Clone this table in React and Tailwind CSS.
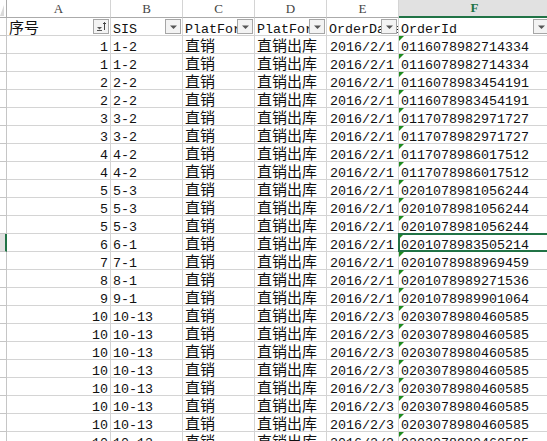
import React from "react";

const mono = { fontFamily: '"Liberation Mono", "Noto Sans CJK SC", monospace' };
const cjk = { fontFamily: '"Noto Sans CJK SC", "Liberation Mono", sans-serif' };

const cols = [
  { key: "A", w: "w-[104px]" },
  { key: "B", w: "w-[72px]" },
  { key: "C", w: "w-[72px]" },
  { key: "D", w: "w-[72px]" },
  { key: "E", w: "w-[72px]" },
  { key: "F", w: "w-[152px]" },
];

const ids = [
  [1, "1-2", "0116078982714334"],
  [1, "1-2", "0116078982714334"],
  [2, "2-2", "0116078983454191"],
  [2, "2-2", "0116078983454191"],
  [3, "3-2", "0117078982971727"],
  [3, "3-2", "0117078982971727"],
  [4, "4-2", "0117078986017512"],
  [4, "4-2", "0117078986017512"],
  [5, "5-3", "0201078981056244"],
  [5, "5-3", "0201078981056244"],
  [5, "5-3", "0201078981056244"],
  [6, "6-1", "0201078983505214"],
  [7, "7-1", "0201078988969459"],
  [8, "8-1", "0201078989271536"],
  [9, "9-1", "0201078989901064"],
];

const rows = [
  ...ids.map(([n, sis, id]) => ({ n, sis, date: "2016/2/1", id })),
  ...Array.from({ length: 8 }, () => ({
    n: 10,
    sis: "10-13",
    date: "2016/2/3",
    id: "0203078980460585",
  })),
];

const FilterBtn = ({ sorted }) => (
  <div className="absolute right-[1px] top-[1px] w-[16px] h-[15px] border border-[#a6a6a6] bg-[#f3f3f3] flex items-center justify-center">
    {sorted ? (
      <svg width="14" height="13" viewBox="0 0 14 13">
        <path d="M3 7h5l-2.5 2.5z" fill="#555" />
        <path d="M3 10.5h5" stroke="#555" strokeWidth="1" />
        <path d="M10.5 10V2.5M9 4l1.5-1.5L12 4" stroke="#444" strokeWidth="1" fill="none" />
      </svg>
    ) : (
      <svg width="9" height="6" viewBox="0 0 9 6">
        <path d="M1 1.5h7L4.5 5z" fill="#555" />
      </svg>
    )}
  </div>
);

const Cell = ({ w, children, className = "" }) => (
  <div
    className={`${w} h-[18px] shrink-0 border-r border-b border-[#d4d4d4] relative overflow-hidden whitespace-nowrap pt-[6px] text-[13.33px] leading-[11px] text-[#111] ${className}`}
  >
    {children}
  </div>
);

const Zh = ({ children }) => (
  <span style={cjk} className="text-[15px] leading-[4px]">
    {children}
  </span>
);

export default function App() {
  return (
    <div className="w-[547px] h-[441px] overflow-hidden bg-white select-none" style={mono}>
      {/* column letters */}
      <div className="flex h-[18px]">
        <div className="w-[7px] shrink-0 border-r border-b border-[#ababab] bg-white relative">
          <div className="absolute left-0 top-[5px] w-0 h-0 border-l-[4px] border-l-transparent border-b-[11px] border-b-[#dadada]" />
        </div>
        {cols.map((c) => (
          <div
            key={c.key}
            className={`${c.w} shrink-0 h-[18px] flex items-center justify-center text-[13px] ${
              c.key === "F"
                ? "bg-[#e1e1e1] border-b-2 border-[#217346] text-[#217346] font-bold border-r border-r-[#d4d4d4]"
                : "bg-white border-b border-r border-[#d4d4d4] border-b-[#ababab] text-[#444]"
            }`}
            style={{ fontFamily: '"Liberation Serif", serif' }}
          >
            {c.key}
          </div>
        ))}
      </div>

      {/* filter header row */}
      <div className="flex">
        <div className="w-[7px] h-[18px] shrink-0 border-r border-b border-[#c6c6c6]" />
        <Cell w="w-[104px]" className="pl-[2px]">
          <Zh>序号</Zh>
          <FilterBtn sorted />
        </Cell>
        <Cell w="w-[72px]" className="pl-[2px]">
          SIS
          <FilterBtn />
        </Cell>
        <Cell w="w-[72px]" className="pl-[2px]">
          PlatForm
          <FilterBtn />
        </Cell>
        <Cell w="w-[72px]" className="pl-[2px]">
          PlatForm
          <FilterBtn />
        </Cell>
        <Cell w="w-[72px]" className="pl-[2px]">
          OrderDate
          <FilterBtn />
        </Cell>
        <Cell w="w-[152px]" className="pl-[2px]">
          OrderId
          <FilterBtn />
        </Cell>
      </div>

      {/* data rows */}
      {rows.map((r, i) => {
        const sel = i === 11;
        return (
          <div key={i} className="flex">
            <div
              className={`w-[7px] h-[18px] shrink-0 border-b border-[#c6c6c6] ${
                sel ? "bg-[#e1e1e1] border-r-2 border-r-[#217346]" : "border-r"
              }`}
            />
            <Cell w="w-[104px]" className="text-right pr-[2px]">
              {r.n}
            </Cell>
            <Cell w="w-[72px]" className="pl-[2px]">
              {r.sis}
            </Cell>
            <Cell w="w-[72px]" className="pl-[2px]">
              <Zh>直销</Zh>
            </Cell>
            <Cell w="w-[72px]" className="pl-[2px]">
              <Zh>直销出库</Zh>
            </Cell>
            <Cell w="w-[72px]" className="pl-[3px]">
              {r.date}
            </Cell>
            <Cell w="w-[152px]" className={`pl-[2px] ${sel ? "overflow-visible" : ""}`}>
              <div className="absolute left-0 top-0 w-0 h-0 border-t-[5px] border-t-[#1e8c1e] border-r-[5px] border-r-transparent" />
              {r.id}
              {sel && (
                <div className="absolute -left-[1px] -top-[1px] -bottom-[1px] -right-[4px] border-2 border-[#217346]" />
              )}
            </Cell>
          </div>
        );
      })}
    </div>
  );
}
